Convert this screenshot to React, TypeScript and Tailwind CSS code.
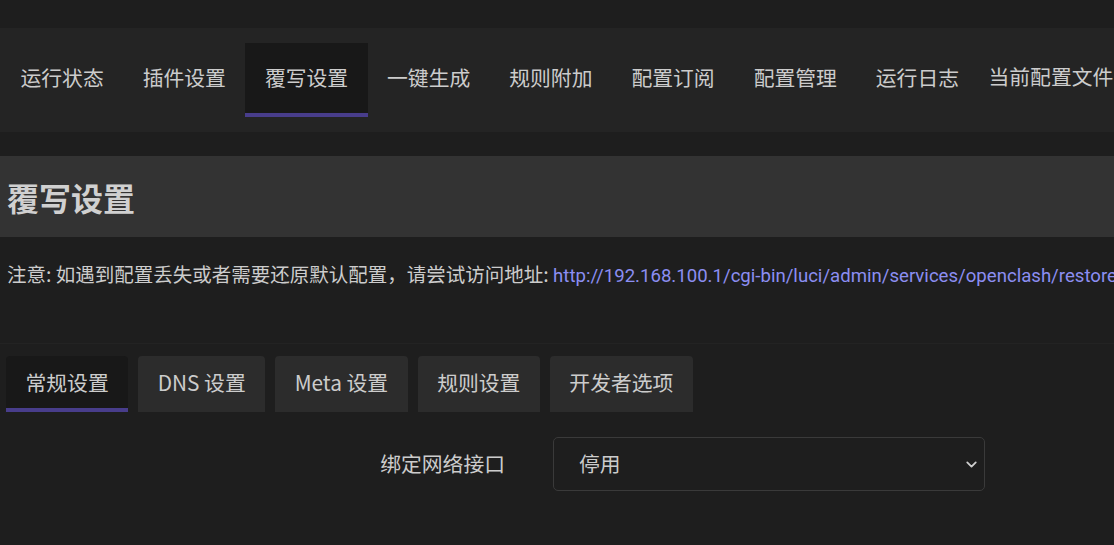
import { ChevronDown } from "lucide-react";

const navTabs = ["运行状态", "插件设置", "覆写设置", "一键生成", "规则附加", "配置订阅", "配置管理", "运行日志"];
const subTabs = ["常规设置", "DNS 设置", "Meta 设置", "规则设置", "开发者选项"];

export default function App() {
  return (
    <main className="min-h-[545px] w-full overflow-hidden bg-[#1e1e1e] font-['Noto_Sans_CJK_SC',sans-serif] text-[#cccccc]">
      <div className="h-[28px]" />
      <nav className="flex h-[104px] items-start overflow-hidden whitespace-nowrap bg-[#242424] pl-[1px]">
        {navTabs.map((tab) => (
          <div
            key={tab}
            className={
              tab === "覆写设置"
                ? "mt-[15px] flex h-[74px] shrink-0 items-center border-b-4 border-[#483d8b] bg-[#181818] px-[19.5px] text-[20.8px]"
                : "mt-[15px] flex h-[74px] shrink-0 items-center border-b-4 border-transparent px-[19.5px] text-[20.8px]"
            }
          >
            {tab}
          </div>
        ))}
        <div className="mt-[12px] flex h-[74px] shrink-0 items-center pl-[10px] text-[20.8px]">当前配置文件</div>
      </nav>
      <div className="h-[24px]" />
      <h2 className="flex h-[81px] items-center bg-[#333333] px-[7px] text-[32px] font-bold text-[#d0d0d0]">覆写设置</h2>
      <p className="h-[106px] overflow-hidden whitespace-nowrap px-[7px] pt-[24px] text-[19.5px] leading-[26px]">
        注意: 如遇到配置丢失或者需要还原默认配置，请尝试访问地址:{" "}
        <a className="font-['Roboto',sans-serif] text-[18.6px] text-[#8c8ef2]">
          http://192.168.100.1/cgi-bin/luci/admin/services/openclash/restore
        </a>
      </p>
      <div className="flex gap-[10px] border-t border-[#232323] px-[6px] pt-[12px]">
        {subTabs.map((tab, i) => (
          <div
            key={tab}
            className={
              i === 0
                ? "flex h-[56px] items-center rounded-t-[4px] border-b-4 border-[#483d8b] bg-[#181818] px-[19.5px] pt-[2px] text-[20.8px]"
                : "flex h-[56px] items-center rounded-t-[4px] border-b-4 border-transparent bg-[#2c2c2c] px-[19.5px] pt-[2px] text-[20.8px]"
            }
          >
            {tab}
          </div>
        ))}
      </div>
      <div className="mt-[25px] flex items-center">
        <label className="w-[505px] text-right text-[20.8px]">绑定网络接口</label>
        <div className="ml-[48px] flex h-[54px] w-[432px] items-center justify-between rounded-[5px] border border-[#3a3a3a] bg-[#1e1e1e] pl-[25px] pr-[4px] text-[20.8px]">
          <span>停用</span>
          <ChevronDown size={17} strokeWidth={2.5} className="text-[#cfcfcf]" />
        </div>
      </div>
    </main>
  );
}
